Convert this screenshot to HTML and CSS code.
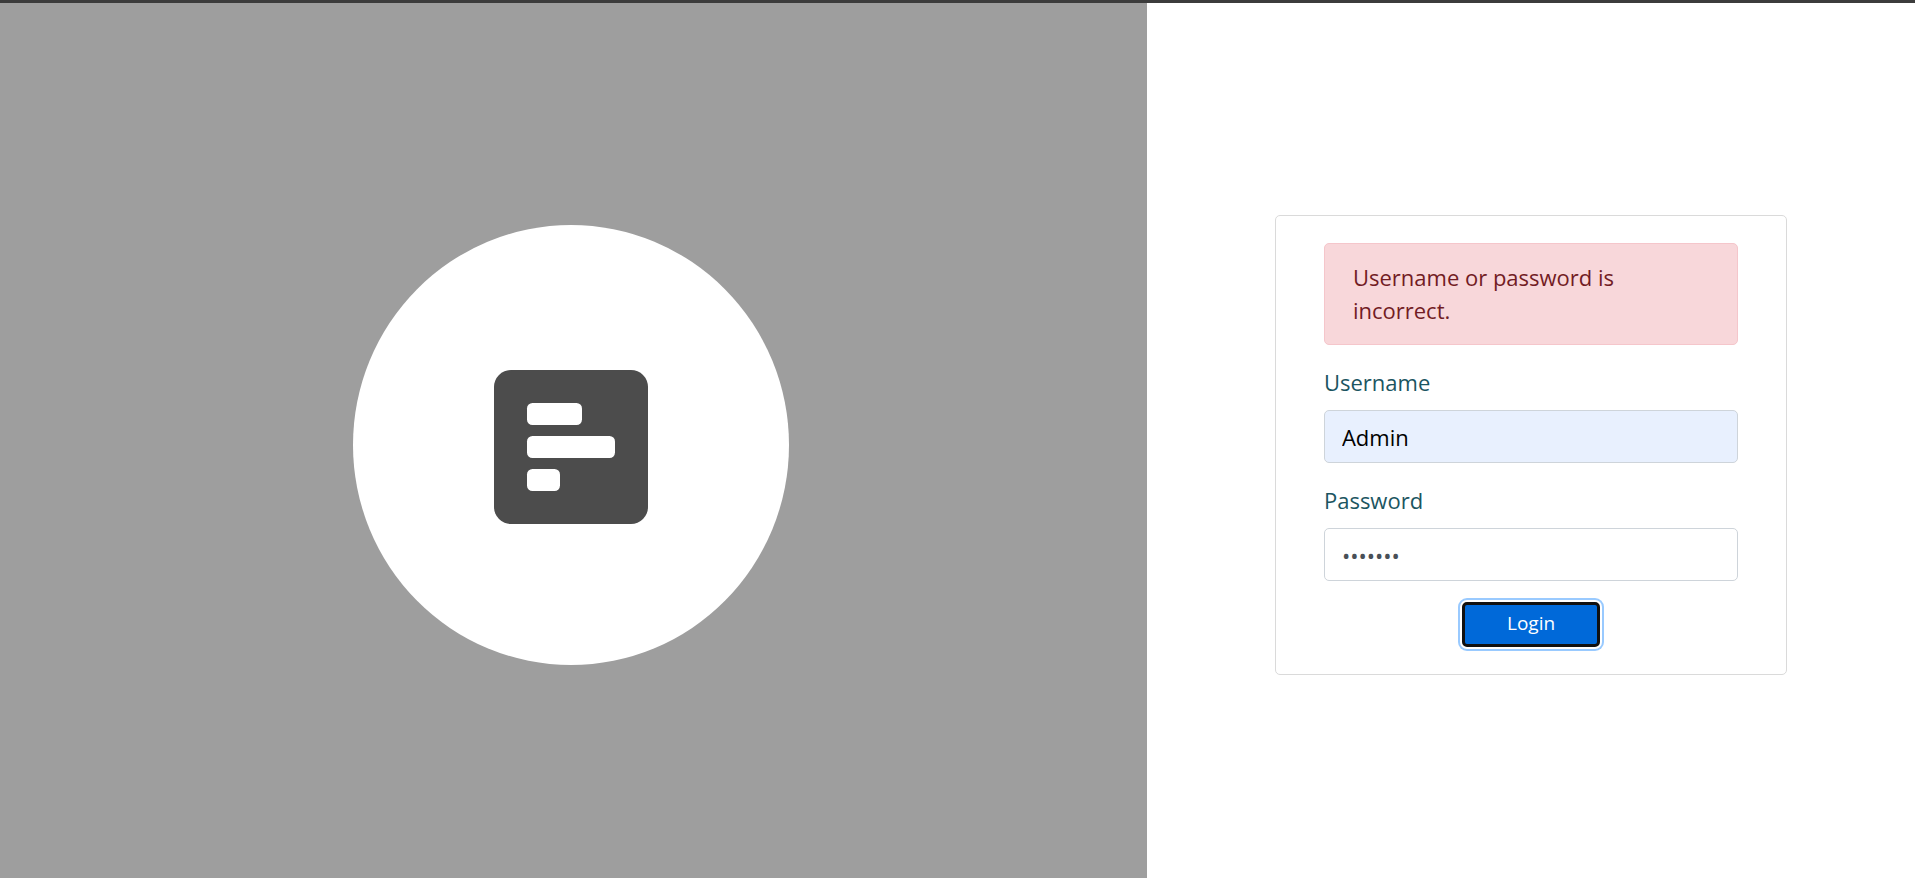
FILE: index.html
```html
<!DOCTYPE html>
<html lang="en">
<head>
<meta charset="utf-8">
<meta name="viewport" content="width=device-width, initial-scale=1">
<title>Login</title>
<link rel="stylesheet" href="styles.css">
</head>
<body>
<main class="page">
  <section class="brand">
    <div class="brand-disc">
      <svg class="brand-icon" viewBox="0 0 154 154" aria-hidden="true">
        <rect width="154" height="154" rx="17" fill="#4c4c4c"/>
        <rect x="33" y="33" width="55" height="22" rx="5.5" fill="#fff"/>
        <rect x="33" y="66" width="88" height="22" rx="5.5" fill="#fff"/>
        <rect x="33" y="99" width="33" height="22" rx="5.5" fill="#fff"/>
      </svg>
    </div>
  </section>
  <section class="panel">
    <form class="card">
      <div class="alert" role="alert">Username or password is incorrect.</div>
      <div class="field">
        <label for="username">Username</label>
        <input class="autofilled" id="username" type="text" value="Admin">
      </div>
      <div class="field">
        <label for="password">Password</label>
        <input id="password" type="password" value="1234567">
      </div>
      <button class="login" type="button">Login</button>
    </form>
  </section>
</main>
</body>
</html>
```
FILE: styles.css
```css
* {
  box-sizing: border-box;
}

body {
  margin: 0;
  font-family: "Open Sans", sans-serif;
  font-size: 22px;
  line-height: 33px;
  background: #fff;
}

.page {
  display: flex;
  min-height: 100vh;
  border-top: 3px solid #3c3c3c;
}

.brand {
  flex: 0 0 59.9%;
  display: flex;
  align-items: center;
  justify-content: center;
  padding: 9px 5px 0 0;
  background: #9e9e9e;
}

.brand-disc {
  display: flex;
  align-items: center;
  justify-content: center;
  width: 436px;
  height: 440px;
  padding-top: 4px;
  border-radius: 50%;
  background: #fff;
}

.brand-icon {
  width: 154px;
  height: 154px;
}

.panel {
  flex: 1;
  display: flex;
  align-items: center;
  justify-content: center;
  padding-top: 9px;
}

.card {
  display: flex;
  flex-direction: column;
  width: 66.7%;
  padding: 27px 48px;
  border: 1px solid #dadada;
  border-radius: 5px;
}

.alert {
  margin-bottom: 21px;
  padding: 17px 28px;
  border: 1px solid #f5c6cb;
  border-radius: 5px;
  background: #f8d7da;
  color: #721c24;
}

.field {
  display: flex;
  flex-direction: column;
  gap: 11px;
  margin-bottom: 21px;
  color: #1b5561;
}

.field input {
  width: 100%;
  height: 53px;
  padding: 8px 17px;
  border: 1px solid #ced4da;
  border-radius: 5px;
  background: #fff;
  color: #495057;
  font: inherit;
}

.field .autofilled {
  background: #e8f0fe;
  color: #000;
}

.login {
  align-self: center;
  width: 138px;
  height: 45px;
  padding: 0 0 2px;
  border: 3px solid #101010;
  border-radius: 5px;
  background: #0069d9;
  box-shadow: 0 0 0 2px #fff, 0 0 0 4px #99caff;
  color: #fff;
  font: inherit;
  font-size: 19px;
}
```
